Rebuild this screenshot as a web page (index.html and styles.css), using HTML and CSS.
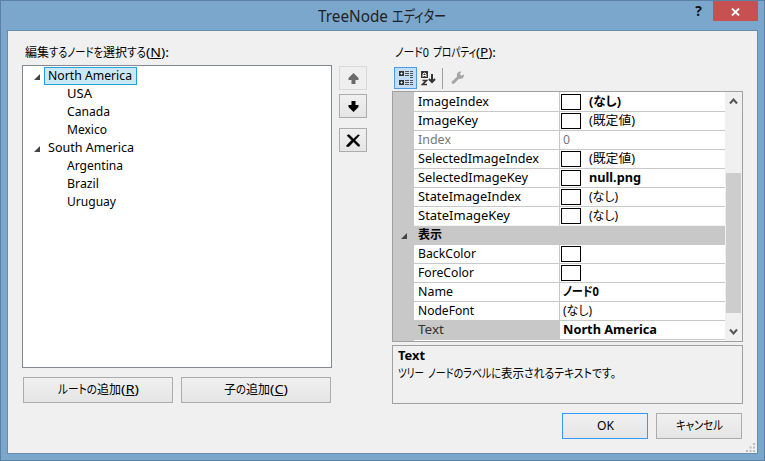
FILE: index.html
```html
<!DOCTYPE html>
<html lang="ja">
<head>
<meta charset="utf-8">
<title>TreeNode エディター</title>
<link rel="stylesheet" href="styles.css">
</head>
<body>
<div class="window">
  <header class="titlebar">
    <h1><span data-w="70">TreeNode</span><span class="kana" data-w="54">エディター</span></h1>
    <div class="help">?</div>
    <div class="close"><svg width="9" height="8" viewBox="0 0 9 8"><path d="M1 .5l7 7M8 .5l-7 7" stroke="#fff" stroke-width="1.8"/></svg></div>
  </header>
  <main class="client">
    <section class="left">
      <div class="caption"><span data-w="24">編集</span><span data-w="54">するノードを</span><span data-w="24">選択</span><span data-w="19">する</span><span data-w="23">(<u>N</u>):</span></div>
      <div class="tree">
        <div class="node root"><i class="tri"></i><span class="name selected"><span data-w="84">North America</span></span></div>
        <div class="node"><span data-w="25">USA</span></div>
        <div class="node"><span data-w="43">Canada</span></div>
        <div class="node"><span data-w="40">Mexico</span></div>
        <div class="node root"><i class="tri"></i><span class="name"><span data-w="86">South America</span></span></div>
        <div class="node"><span data-w="56">Argentina</span></div>
        <div class="node"><span data-w="32">Brazil</span></div>
        <div class="node"><span data-w="49">Uruguay</span></div>
      </div>
      <div class="add-row">
        <div class="button"><span data-w="39">ルートの</span><span data-w="24">追加</span><span data-w="18">(<u>R</u>)</span></div>
        <div class="button"><span data-w="12">子</span><span data-w="10">の</span><span data-w="24">追加</span><span data-w="18">(<u>C</u>)</span></div>
      </div>
    </section>
    <section class="middle">
      <div class="button tool disabled"><svg width="11" height="11" viewBox="0 0 11 11"><path d="M5.500 0L10.500 5v2H7.500v4h-4V7h-3V5z" fill="#6b6b6b"/></svg></div>
      <div class="button tool"><svg width="11" height="11" viewBox="0 0 11 11"><path d="M3.500 0h4v4h3v2l-5 5-5-5V4h3z" fill="#000"/></svg></div>
      <div class="button tool delete"><svg width="15" height="13" viewBox="0 0 15 13"><path d="M1 1.500L3 .5 7.500 5 12 .7l1.500.5L9 6.300l4.500 4.500v1.400h-1.500L7.500 7.800 3 12.500H.7v-1.300L5.700 6.300z" fill="#000" stroke="#000" stroke-width=".5"/></svg></div>
    </section>
    <section class="right">
      <div class="caption prop"><span data-w="34">ノード0</span><span class="gap" data-w="43">プロパティ</span><span data-w="20">(<u>P</u>):</span></div>
      <div class="toolbar">
        <div class="tb active"><svg width="16" height="16" viewBox="0 0 16 16"><path d="M1 1h5v5H1zM1 10h5v5H1z" fill="#333"/><path d="M2.500 3.500h2M3.500 2.500v2M2.500 12.500h2M3.500 11.500v2" stroke="#fff"/><path d="M7 1.500h4M7 3.500h4M7 5.500h4M7 10.500h4M7 12.500h4M7 14.500h4M12 1.500h3M12 3.500h3M12 5.500h3M12 7.500h3M12 10.500h3M12 12.500h3M12 14.500h3" stroke="#555"/></svg></div>
        <div class="tb"><svg width="15" height="15" viewBox="0 0 15 15"><path d="M0 0h7v7H0z" fill="#333"/><path d="M2 6V3l1-1h1l1 1v3M2 4.500h3" fill="none" stroke="#fff"/><path d="M1.500 9.500h4L1.500 13.500h4.500" fill="none" stroke="#333" stroke-width="1.600"/><path d="M11 3v7M8 8l3 3 3-3" fill="none" stroke="#333" stroke-width="2"/></svg></div>
        <i class="sep"></i>
        <div class="tb"><svg width="14" height="14" viewBox="0 0 14 14"><path d="M8 .8a4 4 0 0 1 2.500-.3L8.800 3l1.700 1.800L13 3.500c.4 3-2.300 5-5 4.200l-5 5c-1.500 1-3-.7-2.200-2.100L6 5.800C5.500 3.600 6.200 1.800 8 .8z" fill="#a6a6a6"/></svg></div>
      </div>
      <div class="grid">
        <div class="rows">
          <div class="row first"><i class="gutter"></i><div class="label"><span data-w="71">ImageIndex</span></div><div class="value"><i class="swatch"></i><b data-w="32">(なし)</b></div></div>
          <div class="row"><i class="gutter"></i><div class="label"><span data-w="60">ImageKey</span></div><div class="value"><i class="swatch"></i><span data-w="46">(既定値)</span></div></div>
          <div class="row dim"><i class="gutter"></i><div class="label"><span data-w="33">Index</span></div><div class="value"><span data-w="7">0</span></div></div>
          <div class="row"><i class="gutter"></i><div class="label"><span data-w="121">SelectedImageIndex</span></div><div class="value"><i class="swatch"></i><span data-w="46">(既定値)</span></div></div>
          <div class="row"><i class="gutter"></i><div class="label"><span data-w="110">SelectedImageKey</span></div><div class="value"><i class="swatch"></i><b data-w="52">null.png</b></div></div>
          <div class="row"><i class="gutter"></i><div class="label"><span data-w="103">StateImageIndex</span></div><div class="value"><i class="swatch"></i><span data-w="29">(なし)</span></div></div>
          <div class="row before-category"><i class="gutter"></i><div class="label"><span data-w="92">StateImageKey</span></div><div class="value"><i class="swatch"></i><span data-w="29">(なし)</span></div></div>
          <div class="row category"><i class="gutter"><i class="tri"></i></i><div class="label"><b data-w="24">表示</b></div></div>
          <div class="row"><i class="gutter"></i><div class="label"><span data-w="58">BackColor</span></div><div class="value"><i class="swatch"></i></div></div>
          <div class="row"><i class="gutter"></i><div class="label"><span data-w="56">ForeColor</span></div><div class="value"><i class="swatch"></i></div></div>
          <div class="row"><i class="gutter"></i><div class="label"><span data-w="35">Name</span></div><div class="value"><b data-w="36">ノード0</b></div></div>
          <div class="row"><i class="gutter"></i><div class="label"><span data-w="56">NodeFont</span></div><div class="value"><span data-w="29">(なし)</span></div></div>
          <div class="row current"><i class="gutter"></i><div class="label"><span data-w="26">Text</span></div><div class="value"><b data-w="94">North America</b></div></div>
          <div class="row last"><i class="gutter"></i></div>
        </div>
        <div class="scrollbar">
          <svg width="9" height="7" viewBox="0 0 9 7"><path d="M1 5.500l3.500-4 3.500 4" fill="none" stroke="#555" stroke-width="2"/></svg>
          <i class="thumb"></i>
          <svg width="9" height="7" viewBox="0 0 9 7"><path d="M1 1.500l3.500 4 3.500-4" fill="none" stroke="#555" stroke-width="2"/></svg>
        </div>
      </div>
      <div class="description">
        <div><b data-w="27">Text</b></div>
        <div><span data-w="26">ツリー</span><span class="gap" data-w="73">ノードのラベルに</span><span data-w="23">表示</span><span data-w="92">されるテキストです。</span></div>
      </div>
      <div class="actions">
        <div class="button default"><span data-w="17">OK</span></div>
        <div class="button"><span data-w="47">キャンセル</span></div>
      </div>
    </section>
    <svg class="grip" width="9" height="9" viewBox="0 0 9 9"><path d="M7 0h2v2H7zM3.500 3.500h2v2h-2zM7 3.500h2v2H7zM0 7h2v2H0zM3.500 7h2v2h-2zM7 7h2v2H7z" fill="#bdbdbd"/></svg>
  </main>
</div>
<script src="fit.js"></script>
</body>
</html>
```
FILE: styles.css
```css
* { box-sizing: border-box; }
body {
  margin: 0;
  font: 12.5px/18px "Noto Sans", "Noto Sans CJK JP", sans-serif;
  color: #000;
  overflow: hidden;
}
i { display: block; font-style: normal; }
svg { display: block; }
u { text-underline-offset: 1px; text-decoration-thickness: 1px; }
[data-w] { display: inline-block; flex: none; white-space: nowrap; transform-origin: 0 50%; font-feature-settings: "palt"; }
.window {
  width: 765px;
  height: 461px;
  padding: 0 6px 6px;
  background: #7ba7cd;
  border: 1px solid #5b82a5;
}
.titlebar { height: 29px; display: flex; justify-content: flex-end; padding-left: 311px; }
h1 { margin: 0; display: flex; gap: 4px; flex: 1; font-size: 16px; font-weight: 400; line-height: 30px; color: #222; }
.help { font: bold 14px/20px "Open Sans", sans-serif; width: 27px; text-align: center; margin-right: 1px; color: #111; }
.close { width: 45px; height: 20px; background: #c75050; display: flex; align-items: center; justify-content: center; padding-top: 2px; }
.client {
  position: relative;
  height: 424px;
  border: 1px solid #668dad;
  background: #f0f0f0;
  display: flex;
  padding-left: 14px;
}
.left { width: 310px; padding-top: 12px; }
.caption { height: 22px; line-height: 20px; display: flex; padding-left: 3px; }
.gap { margin-left: 4px; }
.tree { height: 303px; border: 1px solid #828790; background: #fff; padding-top: 1px; }
.node { height: 18px; display: flex; padding-left: 44px; }
.node.root { padding-left: 11px; align-items: center; }
.tri { width: 6px; height: 6px; background: #444; clip-path: polygon(100% 0, 100% 100%, 0 100%); }
.root .tri { margin: 2px 4px 0 0; }
.name { height: 18px; padding: 0 3px; border: 1px solid transparent; line-height: 16px; display: flex; }
.selected { background: #cbe8f6; border-color: #26a0da; width: 93px; }
.add-row { display: flex; gap: 8px; padding: 9px 0 0 1px; }
.button {
  width: 150px;
  height: 26px;
  border: 1px solid #acacac;
  background: linear-gradient(#f0f0f0, #e5e5e5);
  display: flex;
  align-items: center;
  justify-content: center;
}
.middle { width: 53px; margin-left: 7px; padding-top: 35px; display: flex; flex-direction: column; gap: 4px; }
.tool { width: 28px; height: 24px; }
.delete { margin-top: 6px; }
.disabled { border-color: #d9d9d9; background: #efefef; }
.right { width: 351px; padding-top: 12px; }
.toolbar { height: 26px; padding: 2px 0 0 2px; display: flex; }
.tb { width: 23px; height: 22px; display: flex; align-items: center; justify-content: center; }
.tb.active { border: 1px solid #4a9be8; background: #c4ddf6; }
.prop { height: 22px; }
.sep { width: 1px; height: 21px; background: #a0a0a0; margin: 1px 3px 0 2px; }
.grid { height: 251px; border: 1px solid #a0a0a0; background: #fff; display: flex; }
.rows { width: 332px; height: 249px; overflow: hidden; }
.row { height: 19px; display: flex; line-height: 18px; }
.row.first { height: 20px; }
.gutter { width: 21px; background: #c8c8c8; }
.label { width: 145px; padding-left: 4px; border-bottom: 1px solid #c8c8c8; }
.value { flex: 1; display: flex; padding-left: 3px; border-left: 1px solid #c8c8c8; border-bottom: 1px solid #c8c8c8; }
.first .label, .first .value { padding-top: 1px; }
.swatch { width: 20px; height: 16px; border: 1px solid #000; margin: 1px 8px 0 -2px; }
.dim { color: #777; }
.before-category .label, .before-category .value { border-bottom-color: #f4f4f4; }
.category { background: #c8c8c8; }
.category .tri { margin: 7px 0 0 8px; }
.current .label { background: #c8c8c8; color: #333; }
.scrollbar { width: 17px; background: #f0f0f0; display: flex; flex-direction: column; align-items: center; padding: 6px 1px 6px 0; justify-content: space-between; }
.thumb { width: 15px; height: 140px; background: #cdcdcd; margin-top: 62px; margin-bottom: 9px; }
.description { height: 59px; margin-top: 3px; border: 1px solid #a0a0a0; padding: 1px 5px; }
.description div { height: 18px; display: flex; }
.actions { display: flex; justify-content: flex-end; gap: 8px; padding: 9px 1px 0 0; }
.actions .button { width: 86px; }
.actions .default { border-color: #3399ff; }
.grip { position: absolute; right: 2px; bottom: 1px; }
```
FILE: fit.js
```js
// Condenses each label to the width given in its data-w attribute.
for (const el of document.querySelectorAll("[data-w]")) {
  const natural = el.getBoundingClientRect().width;
  const target = Number(el.dataset.w);
  el.style.transform = `scaleX(${target / natural})`;
  el.style.marginRight = `${target - natural}px`;
}
```
